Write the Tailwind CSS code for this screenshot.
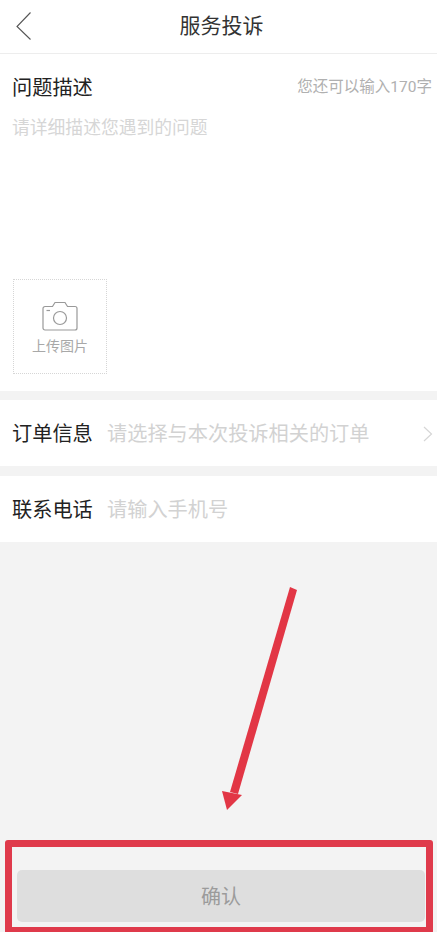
<!DOCTYPE html>
<html lang="zh-CN">

<head>
    <meta charset="UTF-8">
    <meta name="viewport" content="width=device-width, initial-scale=1.0">
    <script src="https://cdn.jsdelivr.net/npm/@tailwindcss/browser@4"></script>
    <title>服务投诉</title>
</head>

<body class="bg-[#f3f3f3] font-['Roboto','Noto_Sans_CJK_SC',sans-serif]">
    <div class="relative h-[932px] w-[437px] overflow-hidden">
        <!-- header -->
        <header class="relative flex h-[54px] items-center justify-center border-b border-[#ededed] bg-white pl-[6px]">
            <svg class="absolute left-[15px] top-[11px] h-[30px] w-[18px]" viewBox="0 0 18 30" fill="none" stroke="#555" stroke-width="1.1">
                <path d="M15.5 1.5 2 15.500 15.5 28.5" />
            </svg>
            <h1 class="text-[21px] text-[#333]">服务投诉</h1>
        </header>

        <!-- description -->
        <section class="h-[337px] bg-white pl-[12px] pr-[13px] pt-[20px]">
            <div class="flex items-center justify-between">
                <h2 class="text-[20.2px] leading-[28px] text-[#222]">问题描述</h2>
                <span class="mr-[-8px] text-[15.5px] text-[#b0b0b0]">您还可以输入170字</span>
            </div>
            <p class="mt-[14px] text-[17.8px] leading-[24px] text-[#d6d6d6]">请详细描述您遇到的问题</p>
            <div class="ml-px mt-[139px] flex h-[95px] w-[94px] flex-col items-center border border-dotted border-[#d6d6d6] pt-[21px]">
                <svg class="h-[30px] w-[36px]" viewBox="0 0 36 30" fill="none" stroke="#999" stroke-width="1.2">
                    <path d="M3 5.5h7.5l2.5-4h10l2.5 4H33a2 2 0 0 1 2 2V27a2 2 0 0 1-2 2H3a2 2 0 0 1-2-2V7.500a2 2 0 0 1 2-2z" />
                    <circle cx="18" cy="17" r="6.500" />
                    <path d="M4.500 9.500h3.500" />
                </svg>
                <span class="mt-[5px] text-[14px] leading-[20px] text-[#a8a8a8]">上传图片</span>
            </div>
        </section>

        <!-- order -->
        <div class="mt-[9px] flex h-[66px] items-center bg-white pl-[12px] pr-[4px] pt-[2px]">
            <span class="w-[95px] text-[20.2px] text-[#222]">订单信息</span>
            <span class="flex-1 text-[20.2px] text-[#d2d2d2]">请选择与本次投诉相关的订单</span>
            <svg class="h-[18px] w-[10px]" viewBox="0 0 10 18" fill="none" stroke="#d6d6d6" stroke-width="1.2">
                <path d="M1 2l7.500 7L1 16" />
            </svg>
        </div>

        <!-- phone -->
        <div class="mt-[10px] flex h-[66px] items-center bg-white pl-[12px] pr-[5px] pt-[2px]">
            <span class="w-[95px] text-[20.2px] text-[#222]">联系电话</span>
            <span class="flex-1 text-[20.2px] text-[#d2d2d2]">请输入手机号</span>
        </div>

        <!-- confirm -->
        <div class="mt-[328px] px-[17px]">
            <button class="h-[52px] w-[408px] rounded-[5px] bg-[#dedede] pt-[2px] text-[20px] text-[#9b9b9b]">确认</button>
        </div>

        <!-- annotations -->
        <svg class="absolute left-[215px] top-[580px] h-[235px] w-[90px]" viewBox="0 0 90 235" fill="#e23645">
            <path d="M75 7 82 10 23 214 15 212z" />
            <path d="M7 211 27 215 12 230z" />
        </svg>
        <div class="absolute left-[5px] top-[840px] h-[94px] w-[428px] rounded-[3px] border-[7px] border-[#df3a4b]"></div>
    </div>
</body>

</html>
